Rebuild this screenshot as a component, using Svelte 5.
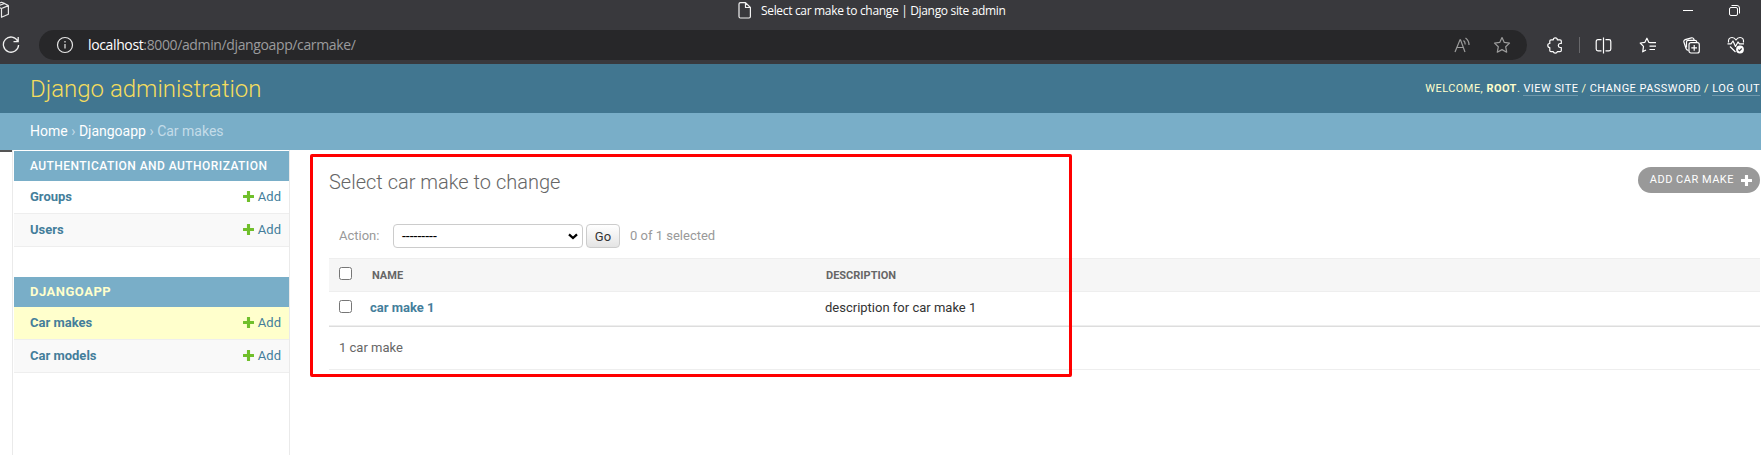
<script>
  const apps = [
    {
      name: 'Authentication and Authorization',
      current: false,
      models: [
        { name: 'Groups', current: false },
        { name: 'Users', current: false }
      ]
    },
    {
      name: 'Djangoapp',
      current: true,
      models: [
        { name: 'Car makes', current: true },
        { name: 'Car models', current: false }
      ]
    }
  ];
  const plus = 'M5.7 0h2.600q.4 0 .4.4v3.900h3.900q.4 0 .4.4v2.600q0 .4-.4.4H8.700v3.900q0 .4-.4.4H5.700q-.4 0-.4-.4V7.700H1.400q-.4 0-.4-.4V4.700q0-.4.4-.4h3.900V.4q0-.4.4-.4z';
</script>

<div class="page">
  <div class="titlebar">
    <svg class="workspace" width="10" height="18" viewBox="0 0 10 18" fill="none" stroke="#e8e8e8" stroke-width="1.2" stroke-linejoin="round">
      <path d="M1.500 8.500L8.400 5.600v8.700L1.500 17.300V8.500L-3 6.500M8.400 5.600L4.500 3.500-2 6M5 3.500L1.500 2.300-2 3.500" />
    </svg>
    <div class="tab">
      <svg width="14" height="17" viewBox="0 0 14 17" fill="none" stroke="#f2f2f2" stroke-width="1.2" stroke-linejoin="round">
        <path d="M2.500.6H7.500L12.400 5.500V14.500Q12.400 16 11 16H2.500Q1 16 1 14.500V2Q1 .6 2.500.6zM7.500.6V5.500H12.400" />
      </svg>
      <span class="tab-title">Select car make to change | Django site admin</span>
    </div>
    <div class="window">
      <svg width="10" height="11" viewBox="0 0 10 11" stroke="#fff"><path d="M0 5.500h10" /></svg>
      <svg width="11" height="11" viewBox="0 0 11 11" fill="none" stroke="#fff">
        <rect x=".5" y="2.500" width="8" height="8" rx="1.500" />
        <path d="M2.500.5H8Q10.500.5 10.500 3v5.500" />
      </svg>
    </div>
  </div>

  <div class="toolbar">
    <svg class="reload" width="18" height="18" viewBox="0 0 18 18" fill="none" stroke="#f0f0f0" stroke-width="1.300">
      <path d="M15.800 5.200A7.600 7.600 0 1 0 16.600 9M16.200 1v4.700h-4.700" />
    </svg>
    <div class="address">
      <svg width="18" height="18" viewBox="0 0 18 18" fill="none" stroke="#e6e6e6" stroke-width="1.200">
        <circle cx="9" cy="9" r="7.500" /><path d="M9 8v4.500M9 5v1.500" />
      </svg>
      <span class="url"><b>localhost</b>:8000/admin/djangoapp/carmake/</span>
      <svg class="read" width="17" height="17" viewBox="0 0 17 17" fill="none" stroke="#9c9c9c" stroke-width="1.200">
        <path d="M1 15L6 2.800h.5L11 15M2.700 10.500h6.700M9.500 3.500q1.700 1.300 1.700 4M11.500 1q3.500 2.500 3.500 7" />
      </svg>
      <svg width="18" height="18" viewBox="0 0 18 18" fill="none" stroke="#9c9c9c" stroke-width="1.200" stroke-linejoin="round">
        <path d="M9 1.500l2.300 4.900 5.200.7-3.800 3.700 1 5.400L9 13.600l-4.700 2.600 1-5.400L1.500 7.100l5.200-.7z" />
      </svg>
    </div>
    <div class="tools">
      <svg width="16" height="17" viewBox="0 0 16 17" fill="none" stroke="#fff" stroke-width="1.200" stroke-linejoin="round">
        <path d="M4 2.800H6.300Q6.300.8 8.300.8T10.300 2.800H13Q14.300 2.800 14.300 4V6.500H13Q11.300 6.700 11.300 8.500T13 10.500H14.300V13.500Q14.300 14.700 13 14.700H10.300Q10 16.200 8.300 16.200T6.300 14.700H4Q2.800 14.700 2.800 13.500V10.500Q.8 10.500.8 8.500T2.800 6.500V4Q2.800 2.800 4 2.800z" />
      </svg>
      <span class="divider"></span>
      <svg width="17" height="17" viewBox="0 0 17 17" fill="none" stroke="#fff" stroke-width="1.200">
        <path d="M6.500 2.600H3Q1.200 2.600 1.200 4.400v7.700Q1.200 13.900 3 13.900h3.500M10.500 2.600H14q1.800 0 1.800 1.800v7.700q0 1.800-1.800 1.800h-3.500M8.500.5v16" />
      </svg>
      <svg width="18" height="17" viewBox="0 0 18 17" fill="none" stroke="#fff" stroke-width="1.200" stroke-linejoin="round">
        <path d="M12.500 5.500L9.800 5.300 7.900 1.200 5.900 5.300 1.200 6l3.300 3.400-.8 5.400L7 13M10.500 5.600H17M10.500 9.100H17M10.500 12.500H16" />
      </svg>
      <svg width="17" height="17" viewBox="0 0 17 17" fill="none" stroke="#fff" stroke-width="1.200">
        <path d="M5.500 13.500Q3.500 13 3 11.500L.9 5Q.5 3.200 2.200 2.600L8.500.8Q10.200.5 10.800 2L11.200 3.500M3.500 10.500V5Q3.500 3.300 5.200 3.300H12Q13.500 3.300 13.800 5" />
        <rect x="6" y="5.700" width="10.300" height="10.300" rx="2" fill="#39393d" /><path d="M11.200 8v5.700M8.300 10.900H14" />
      </svg>
      <svg width="18" height="18" viewBox="0 0 18 18" fill="none" stroke="#fff" stroke-width="1.200" stroke-linejoin="round">
        <path d="M1.500 6.500Q1 1.500 5 1.500 7.500 1.500 9 4 10.500 1.500 13 1.500 17 1.500 16.500 6.500M.5 7.800H4L6 5l2.500 5.500L11 6l1.500 1.800H17M3 10.500L8.500 16" />
        <circle cx="13" cy="13.500" r="3.900" fill="#fff" stroke="none" /><path d="M11.300 13.600l1.200 1.200 2.200-2.300" stroke="#39393d" />
      </svg>
    </div>
  </div>

  <header>
    <h1>Django administration</h1>
    <div class="user">
      Welcome, <strong>root</strong>. <a href="#site">View site</a> / <a href="#password">Change password</a> / <a href="#logout">Log out</a>
    </div>
  </header>
  <nav class="crumbs"><b>Home</b> <i>›</i> <b>Djangoapp</b> <i>›</i> Car makes</nav>

  <div class="body">
    <div class="gutter"></div>
    <aside>
      {#each apps as app}
        <section>
          <h2 class:current={app.current}>{app.name}</h2>
          {#each app.models as model, i}
            <div class="model" class:alt={i % 2 === 1} class:active={model.current}>
              <strong>{model.name}</strong>
              <span class="add">
                <svg width="11" height="11" viewBox="1 0 12 12" fill="#70bf2b"><path d={plus} /></svg>Add
              </span>
            </div>
          {/each}
        </section>
      {/each}
    </aside>
    <main>
      <div class="heading">
        <h3>Select car make to change</h3>
        <a class="add-button" href="#add">
          <span>Add car make</span>
          <svg width="11" height="11" viewBox="1 0 12 12" fill="#fff"><path d={plus} /></svg>
        </a>
      </div>
      <div class="actions">
        <span class="label">Action:</span>
        <div class="select">
          <span>---------</span>
          <svg width="10" height="7" viewBox="0 0 10 7" fill="none" stroke="#000" stroke-width="2.300"><path d="M1 1.300l4 3.700 4-3.700" /></svg>
        </div>
        <button>Go</button>
        <span class="count">0 of 1 selected</span>
      </div>
      <div class="row head">
        <span class="box"></span><span class="name">Name</span><span>Description</span>
      </div>
      <div class="row">
        <span class="box"></span><strong class="name">car make 1</strong><span>description for car make 1</span>
      </div>
      <div class="total">1 car make</div>
    </main>
  </div>
  <div class="highlight"></div>
</div>

<style>
  :global(body) { margin: 0; background: #fff; }
  .page, .page * { box-sizing: border-box; }
  .page {
    position: relative;
    display: flex;
    flex-direction: column;
    width: 1761px;
    height: 455px;
    overflow: hidden;
    font-family: Roboto, "Liberation Sans", sans-serif;
    font-size: 13px;
    color: #333;
    white-space: nowrap;
  }
  svg { display: block; flex: none; }
  h1, h2, h3 { margin: 0; }
  a { text-decoration: none; }

  .titlebar {
    display: flex;
    height: 30px;
    flex: none;
    background: #39393d;
    color: #fff;
    font-family: "Open Sans", "Noto Sans", sans-serif;
  }
  .tab { display: flex; margin-left: 728px; padding-top: 2px; }
  .tab-title { margin-left: 9px; font-size: 12px; line-height: 18px; letter-spacing: -0.33px; }
  .window { display: flex; gap: 36px; margin-left: auto; padding: 5px 21px 0 0; }

  .toolbar { display: flex; height: 34px; flex: none; background: #39393d; }
  .reload { margin: 6px 0 0 2px; }
  .address {
    display: flex;
    align-items: center;
    width: 1488px;
    height: 30px;
    margin-left: 19px;
    padding: 0 16px 0 17px;
    border-radius: 15px;
    background: #272729;
  }
  .url {
    margin-left: 14px;
    padding-bottom: 1px;
    font-family: "Open Sans", "Noto Sans", sans-serif;
    font-size: 14px;
    letter-spacing: -0.37px;
    color: #9b9b9d;
  }
  .url b { font-weight: 400; color: #fff; }
  .read { margin: 0 22px 0 auto; }
  .tools { display: flex; align-items: center; height: 30px; margin-left: 20px; }
  .tools .divider { width: 1px; height: 16px; margin: 0 15px 0 16px; background: #68686b; }
  .tools svg + svg { margin-left: 26.500px; }

  header {
    display: flex;
    justify-content: space-between;
    align-items: center;
    height: 49px;
    flex: none;
    padding: 0 1px 0 30px;
    background: #417690;
    color: #ffc;
  }
  h1 { font-size: 24px; font-weight: 300; color: #f5dd5d; }
  .user { font-size: 11px; letter-spacing: 0.450px; text-transform: uppercase; }
  .user strong { font-weight: 700; }
  .user a { color: #fff; border-bottom: 1px solid rgba(255, 255, 255, 0.25); }
  .crumbs {
    height: 37px;
    flex: none;
    padding-left: 30px;
    background: #79aec8;
    color: #c4dce8;
    font-size: 14px;
    line-height: 36px;
  }
  .crumbs b { font-weight: 400; color: #fff; }
  .crumbs i { font-style: normal; }

  .body { display: flex; flex: 1; }
  .gutter { width: 12px; height: 2px; background: #555; }
  aside {
    width: 278px;
    padding: 1px 0 0 1px;
    border-left: 1px solid #eaeaea;
    border-right: 1px solid #eaeaea;
  }
  section { margin-bottom: 30px; }
  h2 {
    height: 30px;
    padding-left: 16px;
    background: #79aec8;
    color: #fff;
    font-size: 12px;
    font-weight: 500;
    line-height: 30px;
    letter-spacing: 0.450px;
    text-transform: uppercase;
  }
  h2.current { color: #ffc; font-size: 13px; font-weight: 700; letter-spacing: 0.5px; }
  .model {
    display: flex;
    justify-content: space-between;
    align-items: center;
    height: 33px;
    padding: 0 8px 2px 16px;
    border-bottom: 1px solid #eee;
    color: #447e9b;
  }
  .model.alt { background: #f9f9f9; }
  .model.active { background: #ffc; }
  .add { display: flex; align-items: center; gap: 4px; }

  main { width: 1431px; margin-left: 39px; }
  .heading { display: flex; justify-content: space-between; height: 74px; }
  h3 { padding-top: 20px; color: #666; font-size: 20px; font-weight: 300; line-height: 24px; }
  .add-button {
    display: flex;
    align-items: center;
    gap: 7px;
    height: 26px;
    margin-top: 17px;
    padding: 0 8px 2px 12px;
    border-radius: 13px;
    background: #999;
    color: #fff;
    font-size: 11px;
    letter-spacing: 0.5px;
    text-transform: uppercase;
  }
  .add-button svg { margin-top: 2px; }
  .actions { display: flex; height: 34px; padding-left: 10px; color: #999; line-height: 24px; }
  .label { width: 54px; }
  .select {
    display: flex;
    justify-content: space-between;
    align-items: center;
    width: 190px;
    height: 24px;
    padding: 0 4px 0 8px;
    border: 1px solid #ccc;
    border-radius: 4px;
    background: #fff;
    color: #000;
    font-size: 14px;
  }
  button {
    width: 34px;
    height: 24px;
    margin: 0 10px 0 3px;
    padding: 1px 0 0;
    border: 1px solid #ccc;
    border-radius: 4px;
    background: linear-gradient(#fff, #e4e4e4);
    color: #333;
    font-family: inherit;
    font-size: 13px;
  }
  .row {
    display: grid;
    grid-template-columns: 41px 455px 1fr;
    align-items: center;
    height: 34px;
    padding-bottom: 2px;
    border-bottom: 1px solid #eee;
  }
  .row.head {
    grid-template-columns: 43px 454px 1fr;
    padding-bottom: 0;
    border-top: 1px solid #eee;
    background: #f6f6f6;
    color: #666;
    font-size: 11px;
    font-weight: 700;
    text-transform: uppercase;
  }
  .row strong { color: #447e9b; }
  .box {
    width: 13px;
    height: 13px;
    margin: -3px 0 0 10px;
    border: 1px solid #767676;
    border-radius: 2.500px;
    background: #fff;
  }
  .total {
    height: 44px;
    padding-left: 10px;
    border-top: 1px solid #ddd;
    border-bottom: 1px solid #eee;
    color: #666;
    line-height: 42px;
  }
  .highlight {
    position: absolute;
    left: 310px;
    top: 154px;
    width: 762px;
    height: 223px;
    border: 3px solid #f00;
    border-radius: 2px;
  }
</style>
